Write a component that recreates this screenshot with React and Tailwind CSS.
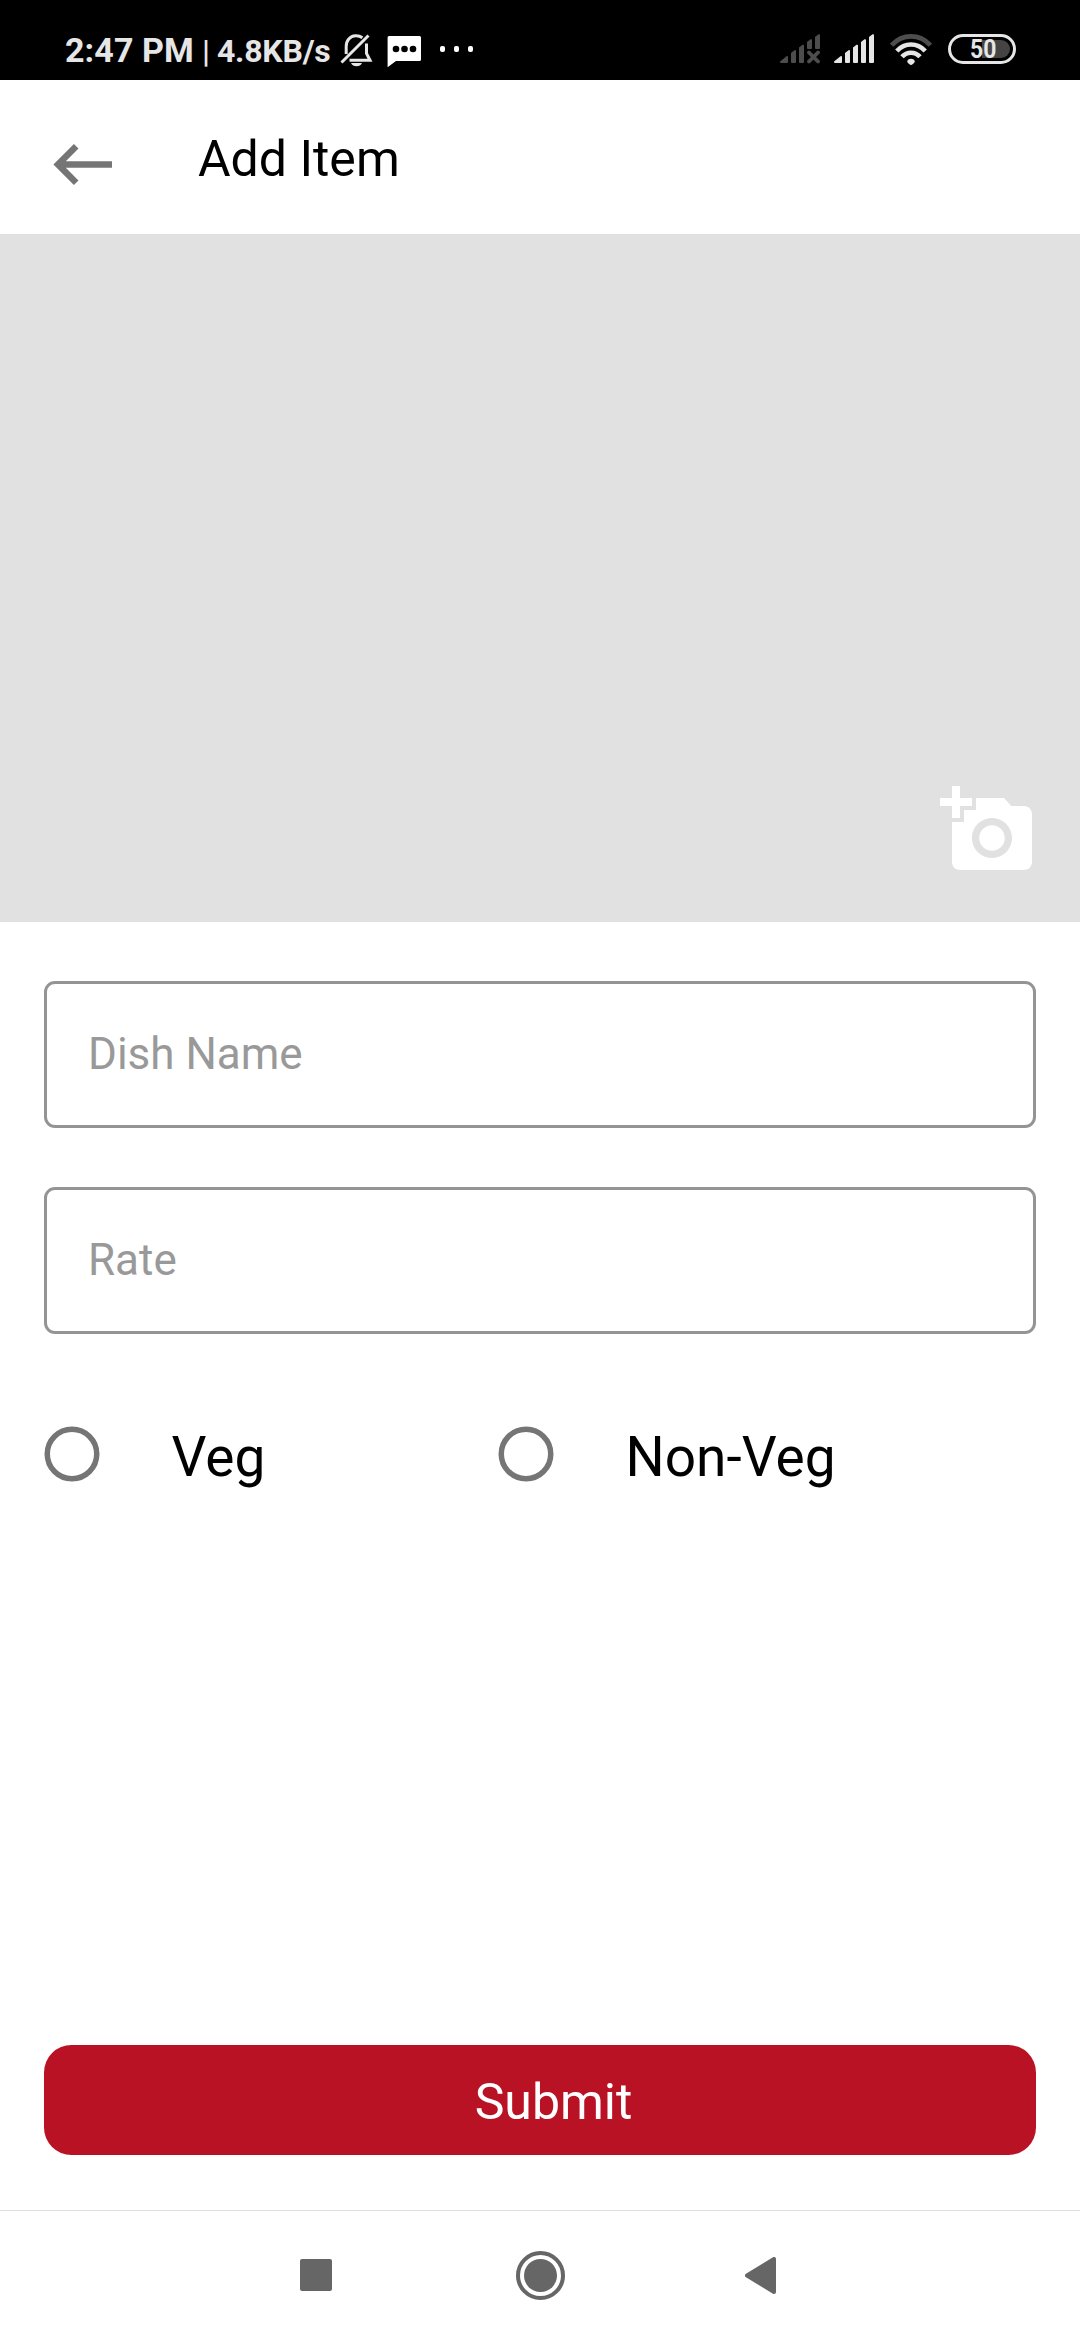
function BellOff() {
  return (
    <svg className="ml-[7px] h-[34px] w-[34px]" viewBox="0 0 34 34" fill="none" stroke="#e6e6e6" strokeWidth="3">
      <path d="M7.200 21V13.500C7.200 7.500 11 3.200 16.500 2.800C19 2.700 21.500 3.400 23.400 4.800" />
      <path d="M27.500 10.500V20.500L31 27.200H10.500" />
      <path d="M2.500 29.500L29.500 2.500" />
      <path d="M12 30H23C22 32.200 20 33.300 17.500 33.300C15 33.300 13 32.200 12 30Z" fill="#e6e6e6" stroke="none" />
    </svg>
  );
}

function Message() {
  return (
    <svg className="ml-[14px] h-[32px] w-[34px]" viewBox="0 0 34 32">
      <path d="M2 0H32.500Q34 0 34 1.500V23.500Q34 25 32.500 25H9L.6 31.200V1.500Q.6 0 2 0Z" fill="#fff" />
      <circle cx="9" cy="13" r="3.300" fill="#000" />
      <circle cx="17.500" cy="13" r="3.300" fill="#000" />
      <circle cx="26" cy="13" r="3.300" fill="#000" />
    </svg>
  );
}

function Signal({ off }) {
  return (
    <svg className="h-[30px] w-[40px]" viewBox="0 0 40 30" fill={off ? "#4d4d4d" : "#e6e6e6"}>
      <path d="M0 27.500L6.500 22.200Q8 21.500 8 23V28Q8 29 7 29H1Q0 29 0 27.500Z" />
      <path d="M11 19L14.500 16.200Q16 15.500 16 17V28Q16 29 15 29H12Q11 29 11 28Z" />
      <path d="M19 13.500L22.500 10.800Q24 10.200 24 11.700V28Q24 29 23 29H20Q19 29 19 28Z" />
      {off ? (
        <>
          <path d="M27 8L30.500 5.300Q32 4.700 32 6.200V14Q32 15 31 15H28Q27 15 27 14Z" />
          <path d="M35 3L38.500.3Q40-.3 40 1.200V14Q40 15 39 15H36Q35 15 35 14Z" />
          <path d="M29 18.500L38 27.500M38 18.500L29 27.500" stroke="#4d4d4d" strokeWidth="3.800" strokeLinecap="round" />
        </>
      ) : (
        <>
          <path d="M27 8L30.500 5.300Q32 4.700 32 6.200V28Q32 29 31 29H28Q27 29 27 28Z" />
          <path d="M35 3L38.500.3Q40-.3 40 1.200V28Q40 29 39 29H36Q35 29 35 28Z" />
        </>
      )}
    </svg>
  );
}

function Wifi() {
  return (
    <svg className="ml-4 h-[32px] w-[42px]" viewBox="0 0 42 32" fill="none" stroke="#e6e6e6" strokeWidth="4.600">
      <path d="M1.600 11.200C12.500-.6 29.500-.6 40.400 11.200" stroke="#4d4d4d" />
      <path d="M6.800 17C14.800 8.400 27.200 8.400 35.200 17" />
      <path d="M12 22.800C17 17.300 25 17.300 30 22.800" />
      <path d="M21 24.800C23 24.800 24.800 26 24.800 27.500C24.800 28.600 22 31 21 31C20 31 17.200 28.600 17.200 27.500C17.200 26 19 24.800 21 24.800Z" fill="#e6e6e6" stroke="none" />
    </svg>
  );
}

function Battery() {
  return (
    <div className="relative ml-4 flex h-[30px] w-[68px] items-center justify-end rounded-full border-[3px] border-[#e6e6e6] pr-[3px]">
      <div className="h-[18px] w-[28px] rounded-r-full bg-[#444]" />
      <span className="absolute left-[18.500px] top-[-2px] origin-left scale-x-[0.9] text-[25.500px] font-bold leading-[28px] text-[#e6e6e6]">50</span>
    </div>
  );
}

function StatusBar() {
  return (
    <div className="flex h-20 shrink-0 items-start bg-black text-[#e6e6e6]">
      <div className="flex h-[34px] w-[272px] shrink-0 items-baseline pl-[65px] pt-[30px]">
        <span className="whitespace-nowrap text-[34px] font-bold leading-[40px] tracking-[0.1px]">2:47 PM</span>
        <span className="ml-[8px] text-[32px] font-medium leading-[40px]">|</span>
        <span className="ml-[7px] whitespace-nowrap text-[32px] font-bold leading-[40px] tracking-[-0.2px]">4.8KB/s</span>
      </div>
      <div className="flex w-[208px] items-start pl-[60px] pt-[33px]">
        <BellOff />
        <div className="pt-[3px]"><Message /></div>
        <svg className="ml-[19px] mt-[12px] h-[8px] w-[35px]" viewBox="0 0 35 8" fill="#fff">
          <rect x="0" y="1" width="5" height="6" rx="2" />
          <rect x="14" y="1" width="5" height="6" rx="2" />
          <rect x="28" y="1" width="5" height="6" rx="2" />
        </svg>
      </div>
      <div className="ml-auto flex items-start pr-16 pt-[34px]">
        <Signal off />
        <div className="ml-[14px]"><Signal /></div>
        <Wifi />
        <Battery />
      </div>
    </div>
  );
}

function Field({ label }) {
  return (
    <div className="h-[147px] rounded-[11px] border-[3px] border-[#949494] pl-[41px] pt-[44px]">
      <input
        placeholder={label}
        className="block h-[52px] w-full bg-transparent text-[44px] leading-[52px] outline-none placeholder:text-[#999] placeholder:opacity-100"
      />
    </div>
  );
}

function Radio({ label }) {
  return (
    <label className="flex w-[454px] items-start">
      <svg className="h-[56px] w-[56px]" viewBox="0 0 56 56" fill="none" stroke="#757575" strokeWidth="5.500">
        <circle cx="28" cy="28" r="24.750" />
      </svg>
      <span className="ml-[71.500px] mt-[-1px] text-[55px] leading-[64px]">{label}</span>
    </label>
  );
}

export default function App() {
  return (
    <div className="flex h-[2340px] w-[1080px] flex-col overflow-hidden bg-white font-[Roboto,sans-serif] text-black">
      <StatusBar />
      <header className="flex h-[154px] shrink-0 items-start pl-[53px]">
        <svg className="mt-[64px] h-[41px] w-[59px]" viewBox="0 0 59 41" fill="none" stroke="#757575" strokeWidth="6.500">
          <path d="M59 20.500H5M23.200 2.300L5 20.500L23.200 38.700" />
        </svg>
        <h1 className="ml-[86px] mt-[50px] text-[50px] font-normal leading-[58px]">Add Item</h1>
      </header>
      <section className="flex h-[688px] shrink-0 items-end justify-end bg-[#e1e1e1] pb-[44px] pr-[44px]">
        <svg className="h-24 w-24" viewBox="0 0 24 24" fill="#fff">
          <path d="M3 4V1h2v3h3v2H5v3H3V6H0V4h3zm3 6V7h3V4h7l1.830 2H21c1.100 0 2 .9 2 2v12c0 1.100-.9 2-2 2H5c-1.100 0-2-.9-2-2V10h3zm7 9c2.760 0 5-2.240 5-5s-2.240-5-5-5-5 2.240-5 5 2.240 5 5 5zm-3.200-5c0 1.770 1.430 3.200 3.200 3.200s3.200-1.430 3.200-3.200-1.430-3.200-3.200-3.200-3.200 1.430-3.200 3.200z" />
        </svg>
      </section>
      <main className="flex grow flex-col px-[44px] pt-[59px]">
        <div className="flex flex-col gap-[59px]">
          <Field label="Dish Name" />
          <Field label="Rate" />
        </div>
        <div className="mt-[92px] flex">
          <Radio label="Veg" />
          <Radio label="Non-Veg" />
        </div>
        <button className="mb-[55px] mt-auto h-[110px] rounded-[27.500px] bg-[#b91224] pl-[27px] pt-[3px] text-[50px] leading-[58px] text-white">
          Submit
        </button>
      </main>
      <nav className="flex h-[130px] shrink-0 items-start border-t border-[#e0e0e0]">
        <div className="ml-[300px] mt-[48px] h-[32px] w-[32px] rounded-[2px] bg-[#666]" />
        <div className="ml-[184px] mt-[40px] flex h-[49px] w-[49px] items-center justify-center rounded-full border-[4px] border-[#666]">
          <div className="h-[33px] w-[33px] rounded-full bg-[#666]" />
        </div>
        <svg className="ml-[180px] mt-[46px] h-[37px] w-[31px]" viewBox="0 0 31 37">
          <path d="M2 18.500L29 2V35Z" fill="#666" stroke="#666" strokeWidth="4" strokeLinejoin="round" />
        </svg>
      </nav>
    </div>
  );
}
